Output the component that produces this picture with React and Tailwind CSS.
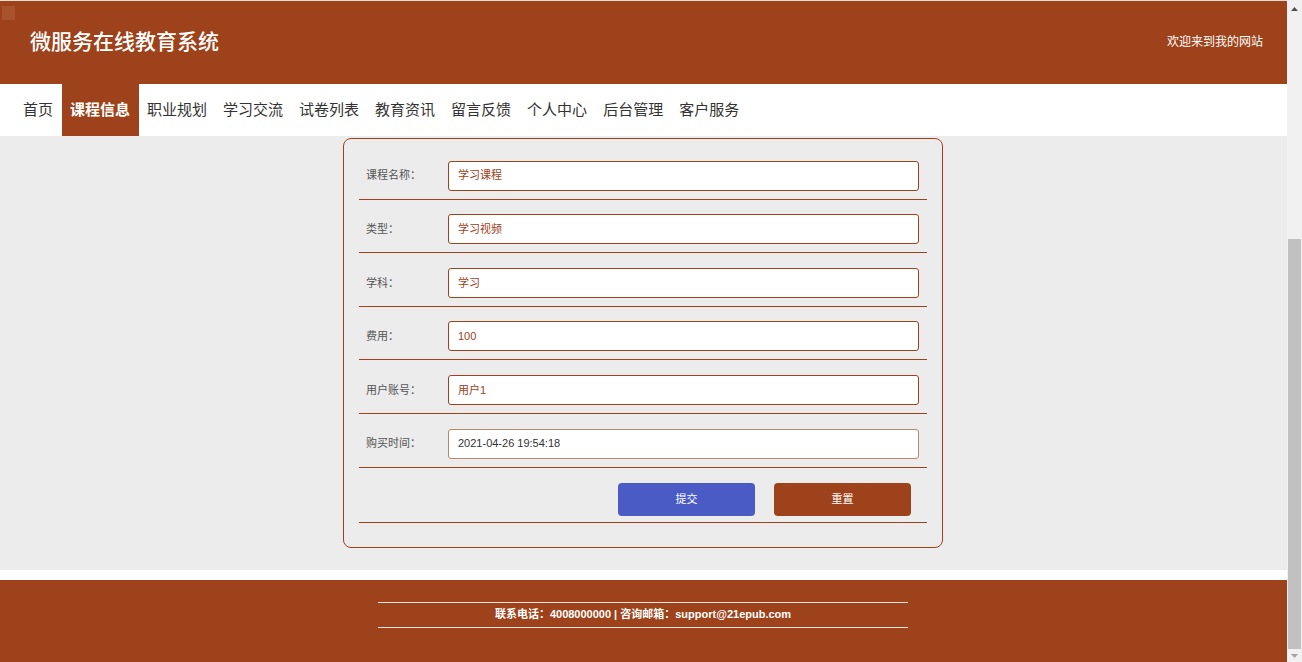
import React from "react";

const fields = [
  { label: "课程名称：", value: "学习课程" },
  { label: "类型：", value: "学习视频" },
  { label: "学科：", value: "学习" },
  { label: "费用：", value: "100" },
  { label: "用户账号：", value: "用户1" },
  { label: "购买时间：", value: "2021-04-26 19:54:18", date: true },
];

const nav = ["首页", "课程信息", "职业规划", "学习交流", "试卷列表", "教育资讯", "留言反馈", "个人中心", "后台管理", "客户服务"];

export default function App() {
  return (
    <div
      className="flex w-[1302px] h-[662px] overflow-hidden bg-white"
      style={{ fontFamily: '"Liberation Sans", "Noto Sans CJK SC", sans-serif' }}
    >
      <div className="flex flex-col w-[1287px] shrink-0">
        <div className="h-[1px] bg-[#f2ddd3]" />
        <header className="relative h-[83px] bg-[#9d421a] flex items-center justify-between pl-[30px] pr-[24px]">
          <div className="absolute left-[2px] top-[5px] w-[13px] h-[14px] bg-[#a9532d]" />
          <h1 className="text-white text-[21px] font-medium -mt-[2px]">微服务在线教育系统</h1>
          <div className="text-white text-[12px] -mt-[2px]">欢迎来到我的网站</div>
        </header>
        <nav className="h-[52px] bg-white flex items-stretch pl-[15.5px] gap-[1px]">
          {nav.map((n, i) => (
            <div
              key={n}
              className={
                i === 1
                  ? "flex items-center px-[8.5px] bg-[#9d421a] text-white font-bold text-[15px]"
                  : "flex items-center px-[7.5px] text-[#333] text-[15px]"
              }
            >
              {n}
            </div>
          ))}
        </nav>
        <main className="bg-[#ececec] flex justify-center pt-[2px] pb-[22px]">
          <div className="w-[600px] border border-[#9d421a] rounded-[8px] px-[15px] pt-[7px] pb-[24px] -ml-[1px]">
            {fields.map((f) => (
              <div key={f.label} className="flex items-center pt-[14.6px] pb-[8px] border-b border-[#9d421a]">
                <div className="w-[89px] pl-[7px] text-[11px] text-[#555] shrink-0">{f.label}</div>
                <div
                  className={
                    "w-[471px] h-[30px] bg-white rounded-[3px] border flex items-center px-[9px] text-[11px] " +
                    (f.date ? "border-[#b9876b] text-[#333]" : "border-[#9d421a] text-[#9d421a]")
                  }
                >
                  {f.value}
                </div>
              </div>
            ))}
            <div className="flex justify-end gap-[19px] pr-[16px] pt-[15px] pb-[6px] border-b border-[#9d421a]">
              <button className="w-[137px] h-[33px] rounded-[4px] bg-[#4a5bc6] text-white text-[11px]">提交</button>
              <button className="w-[137px] h-[33px] rounded-[4px] bg-[#9d421a] text-white text-[11px]">重置</button>
            </div>
          </div>
        </main>
        <div className="h-[10px] bg-white" />
        <footer className="flex-1 bg-[#9d421a] flex justify-center pt-[22px]">
          <div className="w-[530px] h-[26px] border-t border-b border-[#f4e6df] flex items-center justify-center text-white text-[11px] font-bold -ml-[1px]">
            联系电话：4008000000 | 咨询邮箱：support@21epub.com
          </div>
        </footer>
      </div>
      <div className="w-[15px] bg-[#f1f1f1] flex flex-col items-center relative">
        <div className="h-[17px] flex items-center justify-center">
          <svg width="7" height="4" viewBox="0 0 7 4"><path d="M0 4 L3.5 0 L7 4 Z" fill="#505050" /></svg>
        </div>
        <div className="h-[222px]" />
        <div className="w-[13px] h-[410px] bg-[#c1c1c1]" />
        <div className="flex-1 flex items-center justify-center">
          <svg width="7" height="4" viewBox="0 0 7 4"><path d="M0 0 L7 0 L3.5 4 Z" fill="#a3a3a3" /></svg>
        </div>
      </div>
    </div>
  );
}
